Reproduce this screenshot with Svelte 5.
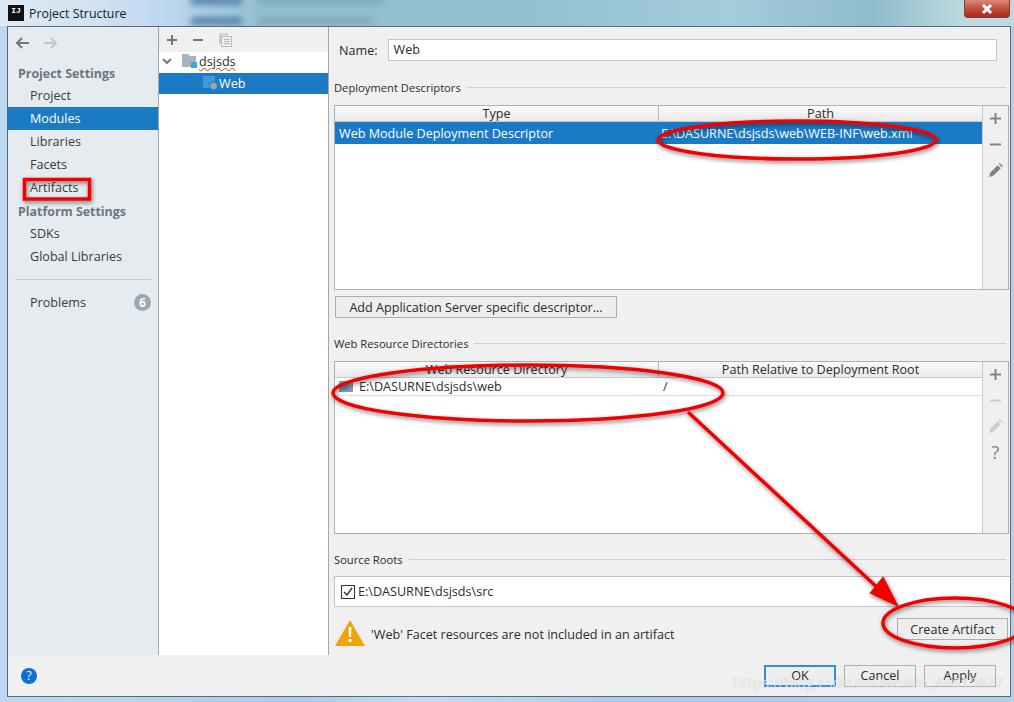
<script lang="ts">
  const settings = ['Project', 'Modules', 'Libraries', 'Facets', 'Artifacts'];
  const platform = ['SDKs', 'Global Libraries'];
</script>

<div class="desktop">
  <header class="titlebar">
    <span class="smudge code-a"></span>
    <span class="smudge code-b"></span>
    <span class="smudge code-c"></span>
    <span class="smudge code-d"></span>
    <span class="app-icon">IJ</span>
    <span class="title">Project Structure</span>
    <span class="close">
      <svg width="14" height="12" viewBox="0 0 14 12"><path d="M3 2l8 8M11 2l-8 8" stroke="#fff" stroke-width="3" /></svg>
    </span>
  </header>

  <div class="window">
    <div class="panels">
      <nav class="sidebar">
        <div class="arrows">
          <svg width="16" height="12" viewBox="0 0 16 12" fill="none" stroke="#6e7780" stroke-width="2"><path d="M14 6H2M7 1L2 6l5 5" /></svg>
          <svg width="16" height="12" viewBox="0 0 16 12" fill="none" stroke="#c2c6ca" stroke-width="2"><path d="M2 6h12M9 1l5 5-5 5" /></svg>
        </div>
        <div class="heading">Project Settings</div>
        {#each settings as item}
          <div class="nav-item" class:selected={item === 'Modules'}>{item}</div>
        {/each}
        <div class="heading">Platform Settings</div>
        {#each platform as item}
          <div class="nav-item">{item}</div>
        {/each}
        <div class="nav-sep"></div>
        <div class="nav-item problems">Problems <span class="badge">6</span></div>
      </nav>

      <section class="modules">
        <div class="tree-tools">
          <svg width="12" height="12" viewBox="0 0 12 12"><path d="M6 1v10M1 6h10" stroke="#6e7780" stroke-width="2" /></svg>
          <svg width="12" height="12" viewBox="0 0 12 12"><path d="M1 6h10" stroke="#6e7780" stroke-width="2" /></svg>
          <svg width="14" height="14" viewBox="0 0 14 14" fill="none" stroke="#b4b9be"><path d="M3.500 3.500h10v10h-10z" stroke-width="1" /><path d="M1 .5h9v2H3v8H1z" fill="#c7cbcf" stroke="none" /><path d="M6 6.500h6M6 8.500h6M6 10.500h6" /></svg>
        </div>
        <div class="tree-row root">
          <svg class="chevron" width="10" height="7" viewBox="0 0 10 7" fill="none" stroke="#6e7780" stroke-width="2"><path d="M1 1l4 4 4-4" /></svg>
          <svg width="16" height="15" viewBox="0 0 16 15"><path d="M0 0h6l2 2h6v11H0z" fill="#aab3ba" /><path d="M9 8h6v6H9z" fill="#3aa8dc" /></svg>
          <span class="squiggle">dsjsds</span>
        </div>
        <div class="tree-row child">
          <svg width="16" height="15" viewBox="0 0 16 15"><path d="M0 0h12v12H0z" fill="#3f9ad6" /><circle cx="10.500" cy="10" r="4" fill="#9aa5ae" stroke="#1b7ac4" /></svg>
          <span>Web</span>
        </div>
      </section>

      <main class="facet">
        <div class="name-row">
          <span>Name:</span>
          <div class="input">Web</div>
        </div>

        <div class="section-label">Deployment Descriptors</div>
        <div class="table-wrap descriptors">
          <div class="table">
            <div class="thead"><span>Type</span><span>Path</span></div>
            <div class="trow active"><span>Web Module Deployment Descriptor</span><span class="path">E:\DASURNE\dsjsds\web\WEB-INF\web.xml</span></div>
          </div>
          <div class="side-tools">
            <span><svg width="13" height="13" viewBox="0 0 13 13"><path d="M6.500 1v11M1 6.500h11" stroke="#7d858c" stroke-width="2" /></svg></span>
            <span><svg width="13" height="13" viewBox="0 0 13 13"><path d="M1 6.500h11" stroke="#7d858c" stroke-width="2" /></svg></span>
            <span><svg width="15" height="15" viewBox="0 0 14 14"><path d="M1 13l1-4 7-7 3 3-7 7zM10 1l1-1 3 3-1 1z" fill="#7d858c" /></svg></span>
          </div>
        </div>

        <button class="btn add" type="button">Add Application Server specific descriptor...</button>

        <div class="section-label resource">Web Resource Directories</div>
        <div class="table-wrap resources">
          <div class="table">
            <div class="thead"><span>Web Resource Directory</span><span>Path Relative to Deployment Root</span></div>
            <div class="trow plain">
              <span class="dir">
                <svg width="15" height="12" viewBox="0 0 15 12"><path d="M0 0h14v11H0z" fill="#8c99a5" /><circle cx="6" cy="6" r="3.500" fill="#5d95bd" /></svg>
                E:\DASURNE\dsjsds\web
              </span>
              <span class="slash">/</span>
            </div>
          </div>
          <div class="side-tools">
            <span><svg width="13" height="13" viewBox="0 0 13 13"><path d="M6.500 1v11M1 6.500h11" stroke="#7d858c" stroke-width="2" /></svg></span>
            <span><svg width="13" height="13" viewBox="0 0 13 13"><path d="M1 6.500h11" stroke="#c9cdd0" stroke-width="2" /></svg></span>
            <span><svg width="15" height="15" viewBox="0 0 14 14"><path d="M1 13l1-4 7-7 3 3-7 7zM10 1l1-1 3 3-1 1z" fill="#c9cdd0" /></svg></span>
            <span class="help-mark">?</span>
          </div>
        </div>

        <div class="section-label resource">Source Roots</div>
        <div class="roots">
          <svg width="14" height="14" viewBox="0 0 14 14" fill="none" stroke="#333"><rect x=".5" y=".5" width="13" height="13" /><path d="M3 7l3 3 5-7" stroke-width="1.300" /></svg>
          <span>E:\DASURNE\dsjsds\src</span>
        </div>

        <div class="warning-row">
          <svg width="30" height="26" viewBox="0 0 30 26"><path d="M15 0l15 26H0z" fill="#f0a30a" /><path d="M13.500 7h3l-.5 10h-2zM13.500 19h3v3h-3z" fill="#fff" /></svg>
          <span class="warning-text">'Web' Facet resources are not included in an artifact</span>
          <button class="btn create" type="button">Create Artifact</button>
        </div>
      </main>
    </div>

    <footer class="footer">
      <span class="help">?</span>
      <div class="actions">
        <button class="btn default" type="button">OK</button>
        <button class="btn" type="button">Cancel</button>
        <button class="btn" type="button">Apply</button>
      </div>
    </footer>
  </div>

  <!-- hand drawn markup on top of the dialog -->
  <svg class="markup" width="1014" height="702" viewBox="0 0 1014 702" fill="none" stroke="#f00000">
    <defs>
      <filter id="shade" x="-10%" y="-30%" width="120%" height="160%">
        <feDropShadow dx="1" dy="2" stdDeviation="2" flood-color="#000" flood-opacity="0.5" />
      </filter>
    </defs>
    <g filter="url(#shade)">
      <rect x="24.500" y="179.500" width="65" height="19.500" stroke-width="3.500" />
      <ellipse cx="797" cy="140" rx="139" ry="19" stroke-width="3.500" />
      <ellipse cx="528" cy="393" rx="195" ry="28" stroke-width="3.500" />
      <path d="M688 412L880 590" stroke-width="3.500" />
      <path d="M897 605L871 593L883 578z" fill="#f00000" stroke-width="2" />
      <ellipse cx="955" cy="623" rx="72" ry="25" stroke-width="3.500" />
    </g>
  </svg>
  <div class="watermark">https://blog.csdn.net/weixin_44613677</div>
</div>

<style>
  :global(body) {
    margin: 0;
  }

  .desktop {
    position: relative;
    width: 1014px;
    height: 702px;
    overflow: hidden;
    font-family: 'Open Sans', 'Noto Sans', sans-serif;
    font-size: 12.6px;
    color: #2b2b2b;
    background: linear-gradient(90deg, #bcd8f2 0%, #a9cdee 30%, #c4dcf3 42%, #a9cdee 60%, #b0d0ee 100%);
  }

  .titlebar {
    position: relative;
    display: flex;
    align-items: center;
    height: 26px;
    padding: 0 4px 0 8px;
    box-sizing: border-box;
    overflow: hidden;
    background: linear-gradient(90deg, #dfeaf3 0%, #cfe1f2 10%, #bcd6ef 17%, #93c0d0 26%, #92c0cf 50%, #a2cddb 72%, #8fbccb 86%, #bcd9e0 95%, #bcd9e0 100%);
  }

  .smudge {
    position: absolute;
    filter: blur(3px);
  }

  .code-a,
  .code-b {
    left: 191px;
    width: 51px;
    background: #5684ad;
  }

  .code-c,
  .code-d {
    left: 257px;
    background: #84a9b8;
  }

  .code-a,
  .code-c {
    top: -3px;
    height: 8px;
  }

  .code-b,
  .code-d {
    top: 17px;
    height: 8px;
  }

  .code-c {
    width: 128px;
  }

  .code-d {
    width: 115px;
  }

  .app-icon {
    position: relative;
    width: 16px;
    height: 16px;
    margin-right: 5px;
    background: #111;
    color: #fff;
    font: bold 8px/11px 'Liberation Mono', monospace;
    text-align: center;
  }

  .title {
    position: relative;
    font-size: 12.4px;
    color: #1b1b1b;
  }

  .close {
    position: relative;
    display: flex;
    align-items: center;
    justify-content: center;
    width: 46px;
    height: 18px;
    margin: -8px 0 0 auto;
    border: 1px solid #8a3a30;
    border-top: 0;
    box-sizing: border-box;
    border-radius: 0 0 4px 4px;
    background: linear-gradient(180deg, #d9887c 0%, #c2493a 55%, #a9281c 100%);
  }

  .window {
    display: flex;
    flex-direction: column;
    width: 1004px;
    height: 671px;
    margin-left: 7px;
    box-sizing: border-box;
    border: 1px solid #5b6b78;
    background: #f0f0f0;
  }

  .panels {
    display: flex;
    height: 628px;
  }

  .sidebar {
    width: 150px;
    flex: none;
    background: #e6ebf0;
    border-right: 1px solid #a6a6a6;
  }

  .arrows {
    display: flex;
    align-items: center;
    gap: 11px;
    height: 34px;
    padding: 0 0 2px 7px;
    box-sizing: border-box;
  }

  .heading {
    height: 23px;
    line-height: 26px;
    padding-left: 10px;
    font-size: 12.4px;
    font-weight: 700;
    color: #6a7680;
  }

  .nav-item {
    height: 23px;
    line-height: 23px;
    padding-left: 22px;
    color: #3a3a3a;
  }

  .nav-item.selected {
    background: #1b7ac4;
    color: #fff;
  }

  .nav-sep {
    height: 1px;
    margin: 11px 7px;
    background: #c8c8c8;
  }

  .problems {
    display: flex;
    align-items: center;
    gap: 6px;
    padding-right: 7px;
  }

  .badge {
    display: flex;
    align-items: center;
    justify-content: center;
    width: 17px;
    height: 17px;
    margin-left: auto;
    border-radius: 50%;
    background: #9aa7b4;
    color: #fff;
    font-size: 12px;
    font-weight: 700;
  }

  .modules {
    width: 169px;
    flex: none;
    background: #fff;
    border-right: 1px solid #a6a6a6;
  }

  .tree-tools {
    display: flex;
    align-items: center;
    gap: 14px;
    height: 25px;
    padding-left: 7px;
    background: #f0f0f0;
  }

  .tree-row {
    display: flex;
    align-items: center;
    height: 21px;
    padding-left: 3px;
  }

  .tree-row.root {
    box-sizing: border-box;
    padding-bottom: 2px;
  }

  .chevron {
    margin-right: 10px;
  }

  .squiggle {
    margin-left: 1px;
    text-decoration: underline wavy #e03030 1px;
    text-underline-offset: 1px;
  }

  .tree-row.child {
    gap: 0;
    padding-left: 44px;
    background: #1b7ac4;
    color: #fff;
  }

  .facet {
    flex: 1;
    min-width: 0;
    padding-left: 5px;
  }

  .name-row {
    display: flex;
    align-items: center;
    gap: 10px;
    height: 22px;
    margin: 12px 13px 0 5px;
  }

  .input {
    flex: 1;
    height: 22px;
    line-height: 20px;
    padding-left: 5px;
    box-sizing: border-box;
    background: #fff;
    border: 1px solid #c4c4c4;
  }

  .section-label {
    display: flex;
    align-items: center;
    gap: 6px;
    height: 16px;
    margin: 18px 4px 0 0;
    font-size: 11.2px;
  }

  .section-label.resource {
    margin-top: 17px;
  }

  .section-label::after {
    content: '';
    flex: 1;
    height: 1px;
    background: #cfcfcf;
  }

  .table-wrap {
    display: flex;
    margin: 10px 1px 0 0;
    background: #fff;
    border: 1px solid #b0b0b0;
    box-sizing: border-box;
  }

  .descriptors {
    height: 185px;
  }

  .resources {
    height: 173px;
  }

  .table {
    flex: 1;
    min-width: 0;
    border-right: 1px solid #c8c8c8;
  }

  .thead,
  .trow {
    display: grid;
    grid-template-columns: 323px 1fr;
  }

  .thead {
    height: 15px;
    line-height: 16px;
    text-align: center;
    background: linear-gradient(180deg, #fafafa, #e9e9e9);
    border-bottom: 1px solid #c8c8c8;
  }

  .thead span + span {
    border-left: 1px solid #bcbcbc;
  }

  .trow {
    align-items: center;
    height: 22px;
    padding-left: 4px;
    grid-template-columns: 319px 1fr;
  }

  .trow.active {
    background: #1b7ac4;
    color: #fff;
  }

  .path {
    padding-left: 3px;
  }

  .trow.plain {
    height: 17px;
    border-bottom: 1px solid #dcdcdc;
  }

  .dir {
    display: flex;
    align-items: center;
    gap: 5px;
  }

  .slash {
    padding-left: 5px;
  }

  .side-tools {
    display: flex;
    flex-direction: column;
    flex: none;
    width: 25px;
    background: #f0f0f0;
  }

  .side-tools span {
    display: flex;
    align-items: center;
    justify-content: center;
    height: 26px;
  }

  .side-tools span:first-child {
    margin-top: -1px;
  }

  .help-mark {
    font-size: 18px;
    color: #7d858c;
  }

  .btn {
    height: 22px;
    padding: 0;
    font: inherit;
    color: #2b2b2b;
    background: #eeeeee;
    border: 1px solid #adadad;
  }

  .add {
    display: block;
    width: 282px;
    margin: 6px 0 0 1px;
  }

  .roots {
    display: flex;
    align-items: center;
    gap: 3px;
    height: 31px;
    margin-top: 9px;
    padding-left: 6px;
    box-sizing: border-box;
    background: #fff;
    border: 1px solid #c4c4c4;
    border-right: 0;
  }

  .warning-row {
    display: flex;
    align-items: center;
    height: 28px;
    margin: 12px 2px 0 1px;
  }

  .warning-text {
    margin-left: 6px;
    padding-top: 3px;
  }

  .create {
    width: 111px;
    height: 22px;
    margin: -8px 0 0 auto;
  }

  .footer {
    display: flex;
    align-items: center;
    flex: 1;
    padding: 0 14px 0 13px;
  }

  .help {
    display: flex;
    align-items: center;
    justify-content: center;
    width: 16px;
    height: 16px;
    border-radius: 50%;
    background: #0a6fd6;
    color: #fff;
    font-size: 12px;
  }

  .actions {
    display: flex;
    gap: 8px;
    margin-left: auto;
  }

  .actions .btn {
    width: 72px;
  }

  .default {
    border: 2px solid #2a8fe0;
  }

  .markup {
    position: absolute;
    left: 0;
    top: 0;
    pointer-events: none;
  }

  .watermark {
    position: absolute;
    left: 733px;
    top: 672px;
    font-size: 15px;
    color: rgba(255, 255, 255, 0.72);
    text-shadow: 0 0 1px rgba(120, 120, 120, 0.45);
  }
</style>
